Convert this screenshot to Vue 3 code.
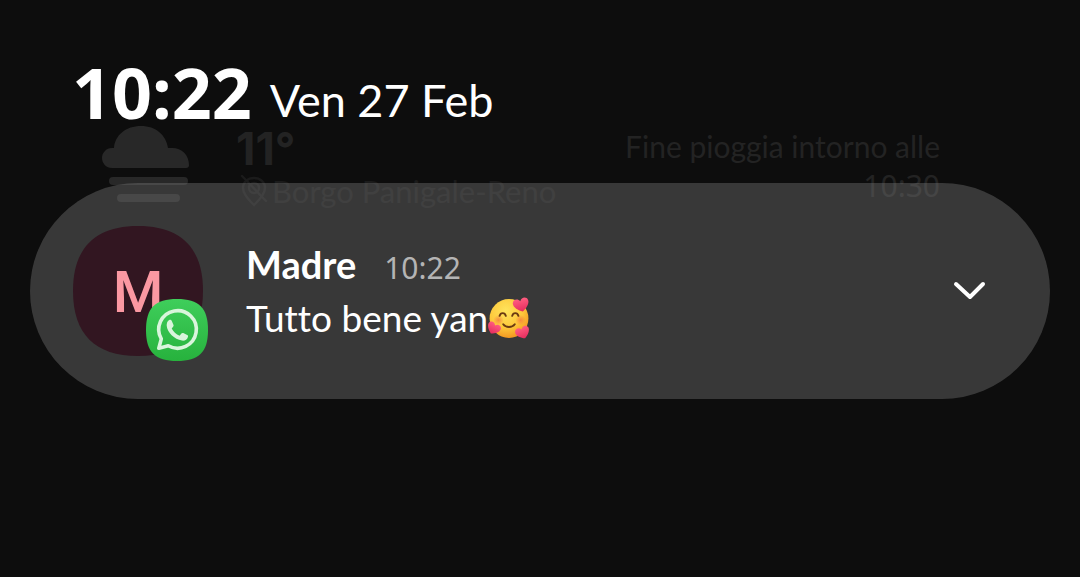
<script setup>
const weather = {
  temperature: '11°',
  place: 'Borgo Panigale-Reno',
  forecast: 'Fine pioggia intorno alle',
  until: '10:30',
}
const notification = { sender: 'Madre', initial: 'M', time: '10:22', text: 'Tutto bene yan' }
</script>

<template>
  <main class="shade">
    <header class="status">
      <time class="clock">10:22</time>
      <span class="date">Ven 27 Feb</span>
    </header>

    <section class="weather" aria-label="Meteo">
      <svg class="cloud" width="88" height="78" viewBox="0 0 88 78" fill="#282828" aria-hidden="true">
        <path d="M10 42C4 42 0 37 0 32S4 22 10 22H12C13 9 24 0 39 0S64 9 66 22H70C80 22 87 29 87 39Q87 42 84 42Z" />
        <rect x="7" y="51" width="79" height="8" rx="4" />
        <rect x="15" y="68" width="63" height="8" rx="4" />
      </svg>
      <div class="conditions">
        <strong class="temperature">{{ weather.temperature }}</strong>
        <span class="place">
          <svg width="28" height="32" viewBox="0 0 28 32" fill="none" stroke="currentColor" stroke-width="2.4" stroke-linecap="round" aria-hidden="true">
            <path d="M14 30C11 27 3 20 3 13C3 7 8 3 14 3S25 7 25 13C25 20 17 27 14 30Z" />
            <circle cx="14" cy="13" r="5" />
            <path d="M2 1L26 26" />
          </svg>
          {{ weather.place }}
        </span>
      </div>
      <p class="forecast">
        <span>{{ weather.forecast }}</span>
        <time class="until">{{ weather.until }}</time>
      </p>
    </section>

    <article class="card">
      <div class="avatar">
        <svg class="avatar-shape" viewBox="0 0 130 130" aria-hidden="true">
          <path d="M65 0C108 0 130 22 130 65S108 130 65 130S0 108 0 65S22 0 65 0Z" fill="#321621" />
        </svg>
        <span class="initial">{{ notification.initial }}</span>
        <svg class="badge" viewBox="0 0 62 62" role="img" aria-label="WhatsApp">
          <defs>
            <linearGradient id="green" x1="0" y1="0" x2="0" y2="1">
              <stop offset="0" stop-color="#3fce5b" />
              <stop offset="1" stop-color="#27b23d" />
            </linearGradient>
          </defs>
          <path d="M31 0C53 0 62 9 62 31S53 62 31 62S0 53 0 31S9 0 31 0Z" fill="url(#green)" />
          <path d="M12.8 49.2L15.3 39.9A18.8 18.8 0 1 1 22.3 46.8Z" fill="none" stroke="#d9f5dc" stroke-width="3.6" stroke-linejoin="round" />
          <path d="M23.6 20.8C24.7 20.7 25.4 21 25.8 22L27.5 26C27.8 26.8 27.4 27.4 26.9 28L25.7 29.4C27.4 32.8 30 35.2 33.6 36.7L35.4 34.5C35.9 33.9 36.5 33.7 37.3 34.1L41.2 36C42 36.4 42.2 36.9 42 37.8C41.3 40.7 38.6 42 36 41.6C28.3 40.4 21.3 33.4 20.7 26.8C20.5 24.4 21.5 21.5 23.6 20.8Z" fill="#d9f5dc" />
        </svg>
      </div>

      <div class="content">
        <div class="title">
          <h1 class="sender">{{ notification.sender }}</h1>
          <time class="received">{{ notification.time }}</time>
        </div>
        <p class="message">
          {{ notification.text }}<svg class="emoji" width="42" height="42" viewBox="0 0 40 40" role="img" aria-label="Faccina sorridente con cuori">
            <defs>
              <radialGradient id="face" cx="0.42" cy="0.3" r="0.72">
                <stop offset="0" stop-color="#ffe45c" />
                <stop offset="0.6" stop-color="#fdc83b" />
                <stop offset="1" stop-color="#f2941f" />
              </radialGradient>
              <radialGradient id="blush">
                <stop offset="0" stop-color="#f5713f" stop-opacity="0.7" />
                <stop offset="1" stop-color="#f5713f" stop-opacity="0" />
              </radialGradient>
              <linearGradient id="heart" x1="0" y1="0" x2="0" y2="1">
                <stop offset="0" stop-color="#ff5d80" />
                <stop offset="1" stop-color="#e52b5d" />
              </linearGradient>
            </defs>
            <circle cx="20" cy="20.5" r="18.5" fill="url(#face)" />
            <circle cx="10" cy="22" r="5" fill="url(#blush)" />
            <circle cx="31" cy="22" r="5" fill="url(#blush)" />
            <g fill="none" stroke="#6a3a12" stroke-width="1.8" stroke-linecap="round">
              <path d="M11 18C12 14.500 16 14.500 17 18" />
              <path d="M23 18C24 14.500 28 14.500 29 18" />
              <path d="M14.500 26C17 29.500 23 29.500 25.500 26" />
            </g>
            <g fill="url(#heart)">
              <path transform="translate(31.500 7) rotate(-14)" d="M0 7C-4 5 -8 1 -7.500 -2.500C-7 -6 -2 -7 0 -3C2 -7 7 -6 7.500 -2.500C8 1 4 5 0 7Z" />
              <path transform="translate(5.500 29.500) rotate(28) scale(0.85)" d="M0 7C-4 5 -8 1 -7.500 -2.500C-7 -6 -2 -7 0 -3C2 -7 7 -6 7.500 -2.500C8 1 4 5 0 7Z" />
              <path transform="translate(33 33.500) rotate(-22) scale(0.9)" d="M0 7C-4 5 -8 1 -7.500 -2.500C-7 -6 -2 -7 0 -3C2 -7 7 -6 7.500 -2.500C8 1 4 5 0 7Z" />
            </g>
          </svg>
        </p>
      </div>

      <button class="expand" type="button" aria-label="Espandi notifica">
        <svg width="34" height="20" viewBox="0 0 34 20" fill="none" stroke="#fff" stroke-width="4" stroke-linecap="round" stroke-linejoin="round" aria-hidden="true">
          <path d="M4 3L18 16L31 3" />
        </svg>
      </button>
    </article>
  </main>
</template>

<style>
body {
  margin: 0;
  background: #0d0d0d;
}
</style>

<style scoped>
.shade {
  min-height: 100vh;
  box-sizing: border-box;
  padding: 52px 30px 32px;
  background: #0d0d0d;
  color: #fff;
  font-family: Lato, "Noto Sans", sans-serif;
  font-variant-ligatures: none;
}

.status {
  display: flex;
  align-items: flex-end;
  gap: 18px;
  height: 84px;
  padding-left: 42px;
}

.clock {
  font-family: "Noto Sans", sans-serif;
  font-size: 70px;
  font-weight: 700;
  line-height: 88px;
}

.date {
  font-size: 45px;
  line-height: 72px;
}

.weather {
  display: flex;
  align-items: flex-start;
  height: 84px;
  margin-top: -10px;
  padding: 0 110px 0 72px;
  color: #232323;
}

.cloud {
  flex: none;
}

.conditions {
  display: flex;
  flex-direction: column;
  margin-left: 46px;
}

.temperature {
  font-family: Inter, sans-serif;
  font-size: 45px;
  line-height: 46px;
}

.place {
  display: flex;
  align-items: center;
  gap: 4px;
  padding-left: 4px;
  color: #1b1b1b;
  font-size: 31px;
  line-height: 38px;
}

.forecast {
  display: flex;
  flex-direction: column;
  margin: 0 0 0 auto;
  font-size: 30px;
  line-height: 40px;
  text-align: right;
}

.until,
.received {
  font-family: "Noto Sans", sans-serif;
  font-size: 30px;
}

.card {
  position: relative;
  display: flex;
  align-items: center;
  box-sizing: border-box;
  min-height: 216px;
  margin-top: -27px;
  padding: 43px;
  border-radius: 108px;
  background: rgba(120, 120, 120, 0.41);
}

.avatar {
  position: relative;
  display: grid;
  flex: none;
  place-items: center;
  width: 130px;
  height: 130px;
}

.avatar-shape,
.initial {
  grid-area: 1 / 1;
}

.initial {
  z-index: 1;
  padding-top: 2px;
  color: #fb98a2;
  font-family: Roboto, sans-serif;
  font-size: 58px;
  font-weight: 500;
  line-height: 58px;
}

.badge {
  position: absolute;
  right: -5px;
  bottom: -5px;
  z-index: 2;
  width: 62px;
  height: 62px;
}

.content {
  flex: 1;
  min-width: 0;
  margin-left: 43px;
}

.title {
  display: flex;
  align-items: baseline;
  gap: 28px;
  line-height: 50px;
}

.sender {
  margin: 0;
  font-size: 38px;
  font-weight: 700;
}

.received {
  color: #b4b4b4;
}

.message {
  display: flex;
  align-items: center;
  margin: 0;
  font-size: 37px;
  line-height: 50px;
}

.expand {
  display: grid;
  place-items: center;
  width: 76px;
  height: 76px;
  padding: 0;
  border: 0;
  background: none;
  cursor: pointer;
}
</style>
